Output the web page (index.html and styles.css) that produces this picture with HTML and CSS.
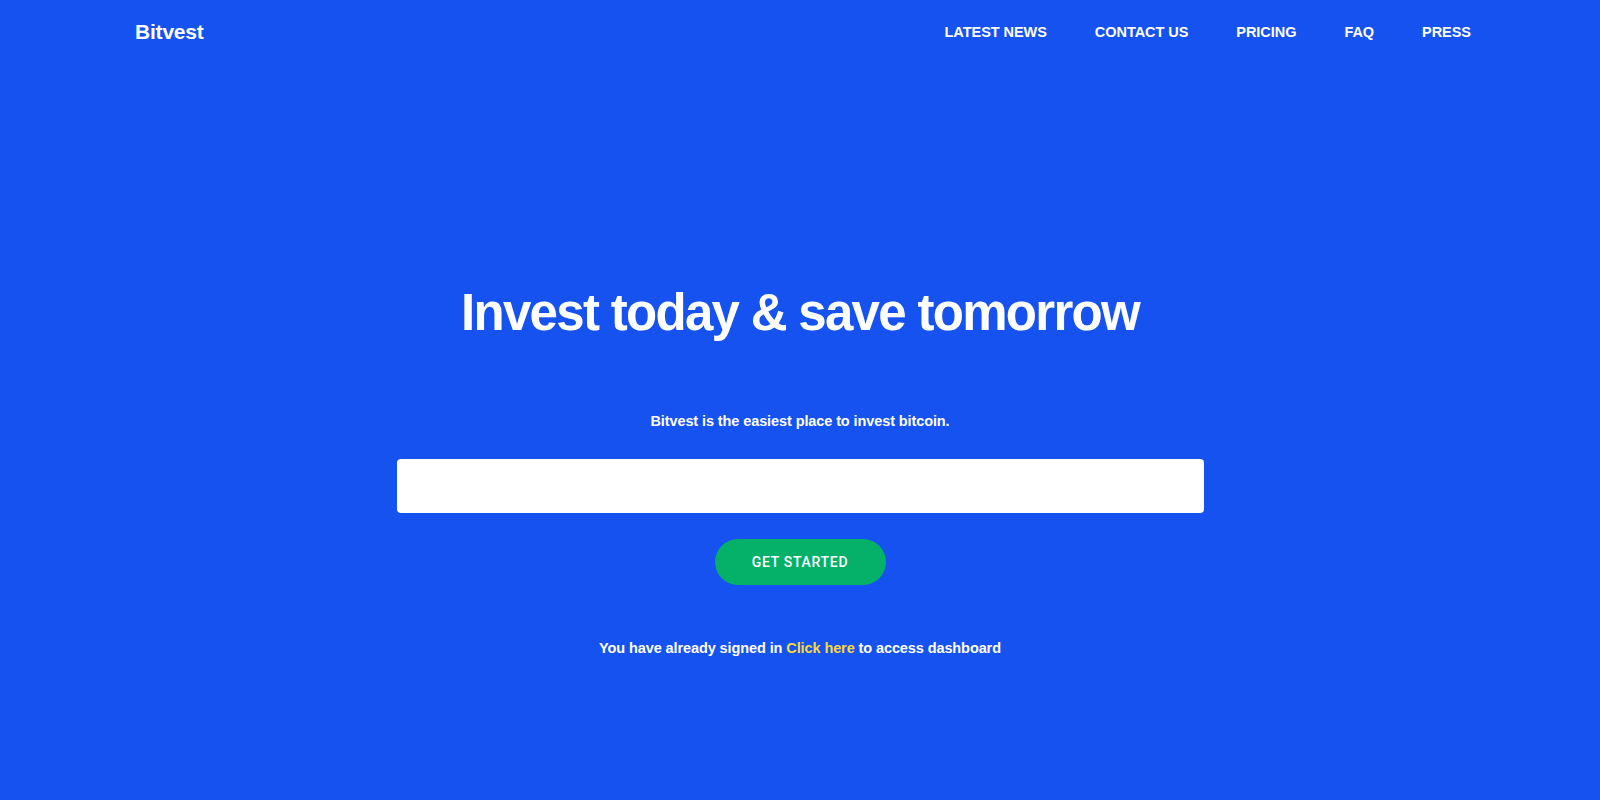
FILE: index.html
```html
<!DOCTYPE html>
<html lang="en">
<head>
<meta charset="utf-8">
<title>Bitvest</title>
<link rel="stylesheet" href="styles.css">
</head>
<body>
<header class="header">
  <a class="logo" href="#">Bitvest</a>
  <nav class="nav">
    <a href="#">LATEST NEWS</a>
    <a href="#">CONTACT US</a>
    <a href="#">PRICING</a>
    <a href="#">FAQ</a>
    <a href="#">PRESS</a>
  </nav>
</header>
<main class="hero">
  <h1 class="title">Invest today &amp; save tomorrow</h1>
  <p class="lead">Bitvest is the easiest place to invest bitcoin.</p>
  <input class="field" type="text" aria-label="Email">
  <button class="cta" type="button">GET STARTED</button>
  <p class="signed">You have already signed in <a href="#" class="link">Click here</a> to access dashboard</p>
</main>
</body>
</html>
```

FILE: styles.css
```css
* { box-sizing: border-box; }
html, body {
  margin: 0;
  height: 100%;
}
body {
  background: #1652f0;
  color: #fff;
  font-family: "Liberation Sans", Arial, sans-serif;
  -webkit-font-smoothing: antialiased;
}
a { color: inherit; text-decoration: none; }

.header {
  display: flex;
  justify-content: space-between;
  align-items: center;
  padding: 0 129px 0 135px;
  height: 64px;
}
.logo {
  font-size: 21px;
  font-weight: 700;
  letter-spacing: -0.2px;
}
.nav {
  display: flex;
  gap: 48px;
}
.nav a {
  font-size: 14.5px;
  font-weight: 700;
  letter-spacing: -0.05px;
}

.hero {
  display: flex;
  flex-direction: column;
  align-items: center;
  padding-top: 217px;
}
.title {
  margin: 0;
  font-size: 51px;
  line-height: 64px;
  font-weight: 700;
  letter-spacing: -1.7px;
}
.lead {
  margin: 67px 0 0;
  font-size: 14.5px;
  line-height: 18px;
  font-weight: 700;
  letter-spacing: -0.1px;
}
.field {
  margin-top: 29px;
  width: 807px;
  height: 54px;
  border: none;
  border-radius: 4px;
  background: #fff;
  outline: none;
}
.cta {
  margin-top: 26px;
  width: 171px;
  height: 46px;
  border: none;
  border-radius: 23px;
  background: #05b169;
  color: #fff;
  font-family: Roboto, "Liberation Sans", sans-serif;
  font-size: 14px;
  font-weight: 500;
  letter-spacing: 0.7px;
}
.signed {
  margin: 54px 0 0;
  font-size: 14.5px;
  line-height: 18px;
  font-weight: 700;
  letter-spacing: -0.1px;
}
.link {
  color: #f8d93a;
}
```
